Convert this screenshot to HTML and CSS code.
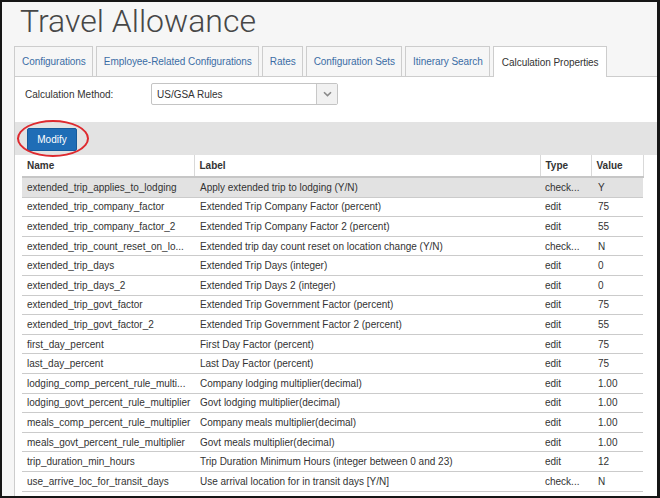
FILE: index.html
```html
<!DOCTYPE html>
<html>
<head>
<meta charset="utf-8">
<link rel="stylesheet" href="styles.css">
</head>
<body>
<div class="frame">
  <h1 class="title">Travel Allowance</h1>
  <nav class="tabs">
    <span class="tab">Configurations</span>
    <span class="tab">Employee-Related Configurations</span>
    <span class="tab">Rates</span>
    <span class="tab">Configuration Sets</span>
    <span class="tab">Itinerary Search</span>
    <span class="tab active">Calculation Properties</span>
  </nav>
  <section class="panel">
    <div class="method-row">
      <label class="method-label">Calculation Method:</label>
      <div class="select">
        <span class="select-value">US/GSA Rules</span>
        <span class="select-arrow"><svg width="9" height="6" viewBox="0 0 9 6"><path d="M1 1.2 L4.5 4.6 L8 1.2" fill="none" stroke="#8a8a8a" stroke-width="1.6"/></svg></span>
      </div>
    </div>
    <div class="toolbar">
      <button class="btn">Modify</button>
      <span class="ring"></span>
    </div>
    <table class="grid">
      <colgroup><col class="c-name"><col class="c-label"><col class="c-type"><col class="c-value"></colgroup>
      <thead>
        <tr><th>Name</th><th>Label</th><th>Type</th><th>Value</th></tr>
      </thead>
      <tbody>
        <tr class="sel"><td>extended_trip_applies_to_lodging</td><td>Apply extended trip to lodging (Y/N)</td><td>check...</td><td>Y</td></tr>
        <tr><td>extended_trip_company_factor</td><td>Extended Trip Company Factor (percent)</td><td>edit</td><td>75</td></tr>
        <tr><td>extended_trip_company_factor_2</td><td>Extended Trip Company Factor 2 (percent)</td><td>edit</td><td>55</td></tr>
        <tr><td>extended_trip_count_reset_on_lo...</td><td>Extended trip day count reset on location change (Y/N)</td><td>check...</td><td>N</td></tr>
        <tr><td>extended_trip_days</td><td>Extended Trip Days (integer)</td><td>edit</td><td>0</td></tr>
        <tr><td>extended_trip_days_2</td><td>Extended Trip Days 2 (integer)</td><td>edit</td><td>0</td></tr>
        <tr><td>extended_trip_govt_factor</td><td>Extended Trip Government Factor (percent)</td><td>edit</td><td>75</td></tr>
        <tr><td>extended_trip_govt_factor_2</td><td>Extended Trip Government Factor 2 (percent)</td><td>edit</td><td>55</td></tr>
        <tr><td>first_day_percent</td><td>First Day Factor (percent)</td><td>edit</td><td>75</td></tr>
        <tr><td>last_day_percent</td><td>Last Day Factor (percent)</td><td>edit</td><td>75</td></tr>
        <tr><td>lodging_comp_percent_rule_multi...</td><td>Company lodging multiplier(decimal)</td><td>edit</td><td>1.00</td></tr>
        <tr><td>lodging_govt_percent_rule_multiplier</td><td>Govt lodging multiplier(decimal)</td><td>edit</td><td>1.00</td></tr>
        <tr><td>meals_comp_percent_rule_multiplier</td><td>Company meals multiplier(decimal)</td><td>edit</td><td>1.00</td></tr>
        <tr><td>meals_govt_percent_rule_multiplier</td><td>Govt meals multiplier(decimal)</td><td>edit</td><td>1.00</td></tr>
        <tr><td>trip_duration_min_hours</td><td>Trip Duration Minimum Hours (integer between 0 and 23)</td><td>edit</td><td>12</td></tr>
        <tr><td>use_arrive_loc_for_transit_days</td><td>Use arrival location for in transit days [Y/N]</td><td>check...</td><td>N</td></tr>
      </tbody>
    </table>
  </section>
</div>
</body>
</html>
```
FILE: styles.css
```css
html, body {
  margin: 0;
  padding: 0;
}
body {
  width: 660px;
  height: 498px;
  overflow: hidden;
  font-family: "Liberation Sans", Arial, sans-serif;
}
.frame {
  box-sizing: border-box;
  width: 660px;
  height: 498px;
  border-style: solid;
  border-color: #161616;
  border-width: 2px 3px 2px 2px;
  background: #f6f6f6;
  display: flex;
  flex-direction: column;
}
.title {
  margin: 0 0 6px 0;
  padding-left: 18px;
  font-family: Roboto, "Open Sans", sans-serif;
  font-weight: 300;
  font-size: 32px;
  line-height: 38px;
  color: #474747;
}
.tabs {
  display: flex;
  gap: 3px;
  margin-left: 12px;
  height: 30px;
  position: relative;
  z-index: 1;
}
.tab {
  box-sizing: border-box;
  height: 30px;
  display: flex;
  align-items: center;
  padding: 0 6px 0 7px;
  border: 1px solid #cdcdcd;
  border-bottom: none;
  background: #f6f6f6;
  color: #3b6da5;
  font-size: 10px;
  letter-spacing: -0.05px;
}
.tab.active {
  height: 31px;
  background: #fff;
  color: #333;
  padding: 0 7px 0 8px;
}
.panel {
  flex: 1;
  margin-left: 12px;
  background: #fff;
  border-top: 1px solid #cdcdcd;
  border-left: 1px solid #cdcdcd;
  display: flex;
  flex-direction: column;
}
.method-row {
  display: flex;
  align-items: center;
  padding: 6px 0 0 10px;
  height: 22px;
}
.method-label {
  width: 126px;
  font-size: 10px;
  color: #333;
}
.select {
  box-sizing: border-box;
  width: 187px;
  height: 22px;
  border: 1px solid #c4c4c4;
  border-radius: 2px;
  display: flex;
  align-items: center;
  background: #fff;
}
.select-value {
  flex: 1;
  padding-left: 5px;
  font-size: 10px;
  color: #333;
}
.select-arrow {
  width: 20px;
  height: 20px;
  border-left: 1px solid #c8c8c8;
  background: #f1f1f1;
  display: flex;
  align-items: center;
  justify-content: center;
}
.toolbar {
  position: relative;
  margin-top: 17px;
  height: 33px;
  background: #e3e3e3;
  padding: 6px 0 0 12px;
  box-sizing: border-box;
}
.btn {
  box-sizing: border-box;
  width: 50px;
  height: 23px;
  border: 1px solid #155a9a;
  border-radius: 2px;
  background: #1f6db6;
  color: #fff;
  font-family: "Liberation Sans", Arial, sans-serif;
  font-size: 10px;
  padding: 0;
}
.ring {
  position: absolute;
  left: 2px;
  top: -2px;
  width: 72px;
  height: 37px;
  box-sizing: border-box;
  border: 2px solid #de2a2f;
  border-radius: 50%;
}
.grid {
  margin-left: 7px;
  width: 621px;
  table-layout: fixed;
  border-collapse: collapse;
  font-size: 10px;
  color: #333;
}
.c-name { width: 172px; }
.c-label { width: 346px; }
.c-type { width: 51px; }
.c-value { width: 52px; }
.grid th {
  height: 21px;
  padding: 0 5px;
  text-align: left;
  font-weight: bold;
  color: #333;
  border-right: 1px solid #d9d9d9;
  border-bottom: 2px solid #c6c6c6;
}
.grid td {
  height: 18.6px;
  padding: 0 5px;
  white-space: nowrap;
  overflow: hidden;
  border-bottom: 1px solid #cbcbcb;
}
.grid td:nth-child(2) { padding-left: 6px; }
.grid td:nth-child(4) { padding-left: 7px; }
.grid tr.sel td {
  background: #e2e2e2;
}
```
